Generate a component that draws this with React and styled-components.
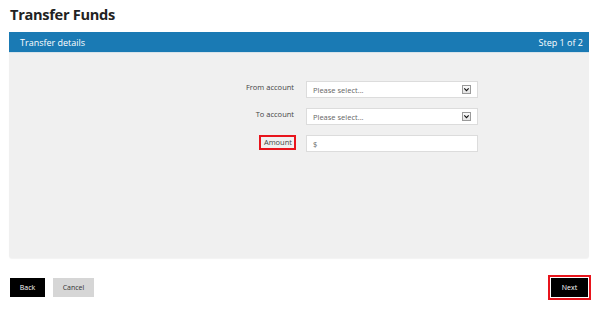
import React from "react";
import styled, { createGlobalStyle } from "styled-components";

const Global = createGlobalStyle`
  html, body { margin: 0; padding: 0; background: #fff; }
  body { font-family: "Open Sans", "Liberation Sans", sans-serif; color: #333; }
`;

const Page = styled.div`
  width: 600px;
  height: 309px;
  box-sizing: border-box;
  padding: 0 11px 0 9px;
  display: flex;
  flex-direction: column;
`;

const Title = styled.h1`
  margin: 0;
  padding: 3px 0 0 1px;
  height: 32px;
  box-sizing: border-box;
  font-size: 14.6px;
  letter-spacing: -0.3px;
  line-height: 22px;
  font-weight: 700;
  color: #222;
`;

const Card = styled.section`
  display: flex;
  flex-direction: column;
`;

const CardHeader = styled.div`
  height: 21px;
  background: #1a7ab4;
  color: #fff;
  display: flex;
  align-items: center;
  justify-content: space-between;
  padding: 0 6px 0 11px;
  font-size: 9px;
  border-bottom: 1px solid #d7e3ea;
  box-sizing: border-box;
`;

const CardBody = styled.div`
  height: 205px;
  background: #f0f0f0;
  border-radius: 0 0 3px 3px;
  box-shadow: 0 1px 1px rgba(0,0,0,0.05);
  padding-top: 28px;
  box-sizing: border-box;
  display: flex;
  flex-direction: column;
  gap: 10px;
`;

const Row = styled.div`
  display: grid;
  grid-template-columns: 285px 172px;
  column-gap: 12px;
  align-items: start;
`;

const Label = styled.label`
  justify-self: end;
  font-size: 7.5px;
  line-height: 10px;
  color: #444;
  margin-top: ${p => (p.$highlight ? "0px" : "1px")};
  ${p =>
    p.$highlight &&
    `
    border: 2px solid #e8141c;
    padding: 0px 2px 1px 3px;
    margin-right: -2px;
  `}
`;

const Field = styled.div`
  height: 17px;
  box-sizing: border-box;
  background: #fff;
  border: 1px solid #dcdcdc;
  display: flex;
  align-items: center;
  justify-content: space-between;
  padding: 0 6px 0 6px;
  font-size: 7.5px;
  color: #666;
`;

const ArrowBox = styled.span`
  width: 9px;
  height: 9px;
  box-sizing: border-box;
  border: 1px solid #9a9a9a;
  background: linear-gradient(#fafafa, #e2e2e2);
  display: flex;
  align-items: center;
  justify-content: center;
`;

const Footer = styled.div`
  margin-top: 20px;
  display: flex;
  align-items: center;
  gap: 8px;
  padding: 0 1px 0 1px;
`;

const Button = styled.button`
  height: 19px;
  min-width: ${p => p.$w}px;
  border: none;
  padding: 0 8px;
  font-family: inherit;
  font-size: 7px;
  background: ${p => (p.$primary ? "#000" : "#d6d6d6")};
  color: ${p => (p.$primary ? "#fff" : "#333")};
  ${p => p.$highlight && `outline: 2px solid #e8141c; outline-offset: 1px;`}
`;

const Spacer = styled.div`
  flex: 1;
`;

const Chevron = () => (
  <svg width="7" height="7" viewBox="0 0 7 7">
    <path d="M1.3 2.3 L3.5 4.6 L5.7 2.3" fill="none" stroke="#111" strokeWidth="1.1" />
  </svg>
);

export default function App() {
  return (
    <>
      <Global />
      <Page>
        <Title>Transfer Funds</Title>
        <Card>
          <CardHeader>
            <span>Transfer details</span>
            <span>Step 1 of 2</span>
          </CardHeader>
          <CardBody>
            <Row>
              <Label>From account</Label>
              <Field>
                <span>Please select...</span>
                <ArrowBox><Chevron /></ArrowBox>
              </Field>
            </Row>
            <Row>
              <Label>To account</Label>
              <Field>
                <span>Please select...</span>
                <ArrowBox><Chevron /></ArrowBox>
              </Field>
            </Row>
            <Row>
              <Label $highlight>Amount</Label>
              <Field>
                <span>$</span>
              </Field>
            </Row>
          </CardBody>
        </Card>
        <Footer>
          <Button $primary $w={35}>Back</Button>
          <Button $w={41}>Cancel</Button>
          <Spacer />
          <Button $primary $highlight $w={37}>Next</Button>
        </Footer>
      </Page>
    </>
  );
}
